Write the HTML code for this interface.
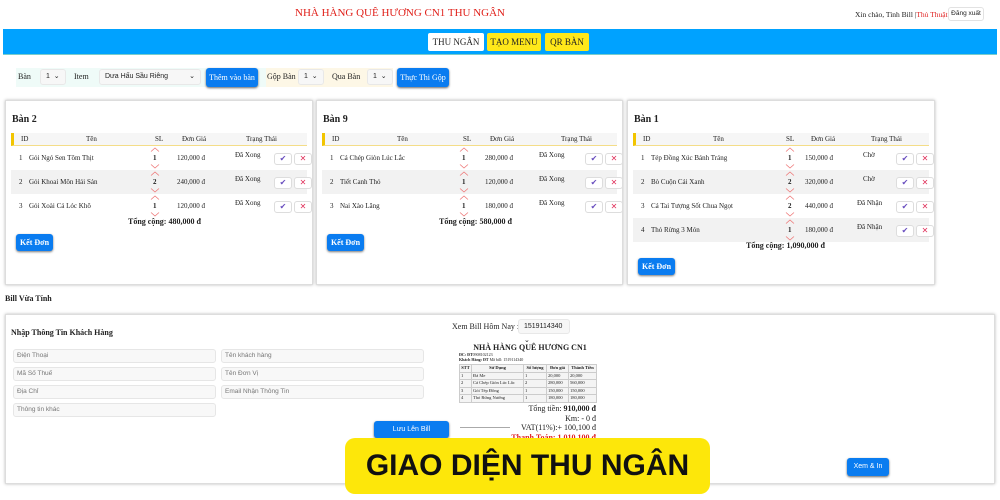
<!DOCTYPE html>
<html><head><meta charset="utf-8"><style>
*{box-sizing:border-box;margin:0;padding:0}
body{width:1000px;height:500px;overflow:hidden;background:#fff;font-family:"Liberation Serif",serif;font-size:8px;color:#222;position:relative}
.a{position:absolute}
.title{left:295px;top:7px;color:#e0201a;font-size:11px;white-space:nowrap}
.bar{left:3px;top:29px;width:994px;height:26px;background:#00a2ff;border-bottom:1px solid #7cc}
.nb{top:33px;height:18px;font-size:9px;line-height:18px;text-align:center;border-radius:2px}
.sel{background:#f7f7f7;border:1px solid #e8e8e8;border-radius:3px;height:16px;font-family:"Liberation Sans",sans-serif;font-size:7px;line-height:14px;padding-left:5px}
.bb{background:#0a7cf0;color:#fff;border-radius:3px;height:19px;font-size:8px;line-height:19px;text-align:center;box-shadow:0 1px 2px #666}
.card{top:100px;height:185px;border:1px solid #ddd;box-shadow:0 0 3px #bbb;background:#fff}
.card h4{position:absolute;left:6px;top:13px;font-size:10px}
.hd{position:absolute;left:5px;right:5px;top:32px;height:13px;background:#f6f6f6;border-left:3px solid #f2c500;border-bottom:1px solid #f4dd88}
.row{position:absolute;left:5px;right:5px;height:24px}
.g{background:#f2f2f2}
.row span,.hd span{position:absolute;top:8px;font-size:7px;white-space:nowrap}
.hd span{top:2px}
.ck,.xx{position:absolute;top:7px;width:18px;height:12px;border:1px solid #ddd;border-radius:3px;background:#fff;font-size:8px;line-height:10px;text-align:center;font-family:"DejaVu Sans",sans-serif}
.ck{color:#6a4fbf}.xx{color:#e0305a}
.row svg{position:absolute;width:10px;height:5px}
.tot{position:absolute;font-weight:bold;font-size:8px}
.ke{position:absolute;left:10px;width:37px;height:17px;background:#0a7cf0;color:#fff;font-weight:bold;border-radius:3px;font-size:8px;line-height:17px;text-align:center;box-shadow:0 1px 2px #777}
.inp{position:absolute;height:14px;border:1px solid #e6e6e6;background:#f8f8f8;border-radius:3px;font-family:"Liberation Sans",sans-serif;font-size:6.5px;color:#777;line-height:12px;padding-left:3px}
.bt{table-layout:fixed}
.bt td,.bt th{border:1px solid #ccc;font-size:4.5px;padding:0 1px;height:7.5px;line-height:6px;white-space:nowrap;overflow:hidden}
</style></head><body>
<div class="a title">NHÀ HÀNG QUÊ HƯƠNG CN1 THU NGÂN</div>
<div class="a" style="left:855px;top:10px;font-size:7.5px">Xin chào, Tinh Bill |<span style="color:#e02020">Thủ Thuật</span></div>
<div class="a" style="left:948px;top:7px;width:36px;height:14px;border:1px solid #e2e2e2;border-radius:3px;font-family:'Liberation Sans',sans-serif;font-size:6.5px;line-height:12px;text-align:center">Đăng xuất</div>
<div class="a bar"></div>
<div class="a nb" style="left:428px;width:56px;background:#fff">THU NGÂN</div>
<div class="a nb" style="left:487px;width:54px;background:#ffe81a">TẠO MENU</div>
<div class="a nb" style="left:545px;width:44px;background:#ffe81a">QR BÀN</div>

<div class="a" style="left:16px;top:68px;width:250px;height:19px;background:#effbf8"></div>
<div class="a" style="left:18px;top:72px;font-size:8px">Bàn</div>
<div class="a sel" style="left:40px;top:69px;width:26px">1 &nbsp;⌄</div>
<div class="a" style="left:74px;top:72px;font-size:8px">Item</div>
<div class="a sel" style="left:99px;top:69px;width:102px">Dưa Hấu Sầu Riêng<span style="position:absolute;right:5px">⌄</span></div>
<div class="a bb" style="left:206px;top:68px;width:52px">Thêm vào bàn</div>
<div class="a" style="left:266px;top:68px;width:127px;height:19px;background:#fdf7e6"></div>
<div class="a" style="left:267px;top:72px;font-size:8px">Gộp Bàn</div>
<div class="a sel" style="left:298px;top:69px;width:26px">1 &nbsp;⌄</div>
<div class="a" style="left:332px;top:72px;font-size:8px">Qua Bàn</div>
<div class="a sel" style="left:367px;top:69px;width:26px">1 &nbsp;⌄</div>
<div class="a bb" style="left:397px;top:68px;width:52px">Thực Thi Gộp</div>

<!-- card 1 -->
<div class="a card" style="left:5px;width:308px">
<h4>Bàn 2</h4>
<div class="hd"><span style="left:7px">ID</span><span style="left:72px">Tên</span><span style="left:141px">SL</span><span style="left:168px">Đơn Giá</span><span style="left:232px">Trạng Thái</span></div>
<div class="row" style="top:45px"><span style="left:8px">1</span><span style="left:18px">Gỏi Ngó Sen Tôm Thịt</span><svg style="left:139px;top:1px" viewBox="0 0 10 5"><polyline points="1,4.5 5,1 9,4.5" fill="none" stroke="#e77" stroke-width="0.8"/></svg><span style="left:142px;font-weight:bold">1</span><svg style="left:139px;top:18px" viewBox="0 0 10 5"><polyline points="1,0.5 5,4 9,0.5" fill="none" stroke="#e77" stroke-width="0.8"/></svg><span style="left:166px">120,000 đ</span><span style="left:224px;top:5px">Đã Xong</span><div class="ck" style="left:263px">✔</div><div class="xx" style="left:283px">✕</div></div>
<div class="row g" style="top:69px"><span style="left:8px">2</span><span style="left:18px">Gỏi Khoai Môn Hải Sản</span><svg style="left:139px;top:1px" viewBox="0 0 10 5"><polyline points="1,4.5 5,1 9,4.5" fill="none" stroke="#e77" stroke-width="0.8"/></svg><span style="left:142px;font-weight:bold">2</span><svg style="left:139px;top:18px" viewBox="0 0 10 5"><polyline points="1,0.5 5,4 9,0.5" fill="none" stroke="#e77" stroke-width="0.8"/></svg><span style="left:166px">240,000 đ</span><span style="left:224px;top:5px">Đã Xong</span><div class="ck" style="left:263px">✔</div><div class="xx" style="left:283px">✕</div></div>
<div class="row" style="top:93px"><span style="left:8px">3</span><span style="left:18px">Gỏi Xoài Cá Lóc Khô</span><svg style="left:139px;top:1px" viewBox="0 0 10 5"><polyline points="1,4.5 5,1 9,4.5" fill="none" stroke="#e77" stroke-width="0.8"/></svg><span style="left:142px;font-weight:bold">1</span><svg style="left:139px;top:18px" viewBox="0 0 10 5"><polyline points="1,0.5 5,4 9,0.5" fill="none" stroke="#e77" stroke-width="0.8"/></svg><span style="left:166px">120,000 đ</span><span style="left:224px;top:5px">Đã Xong</span><div class="ck" style="left:263px">✔</div><div class="xx" style="left:283px">✕</div></div>
<div class="tot" style="left:122px;top:116px">Tổng cộng: 480,000 đ</div>
<div class="ke" style="top:133px">Kết Đơn</div>
</div>

<!-- card 2 -->
<div class="a card" style="left:316px;width:307px">
<h4>Bàn 9</h4>
<div class="hd"><span style="left:7px">ID</span><span style="left:72px">Tên</span><span style="left:138px">SL</span><span style="left:165px">Đơn Giá</span><span style="left:236px">Trạng Thái</span></div>
<div class="row" style="top:45px"><span style="left:8px">1</span><span style="left:18px">Cá Chép Giòn Lúc Lắc</span><svg style="left:137px;top:1px" viewBox="0 0 10 5"><polyline points="1,4.5 5,1 9,4.5" fill="none" stroke="#e77" stroke-width="0.8"/></svg><span style="left:140px;font-weight:bold">1</span><svg style="left:137px;top:18px" viewBox="0 0 10 5"><polyline points="1,0.5 5,4 9,0.5" fill="none" stroke="#e77" stroke-width="0.8"/></svg><span style="left:163px">280,000 đ</span><span style="left:217px;top:5px">Đã Xong</span><div class="ck" style="left:263px">✔</div><div class="xx" style="left:283px">✕</div></div>
<div class="row g" style="top:69px"><span style="left:8px">2</span><span style="left:18px">Tiết Canh Thỏ</span><svg style="left:137px;top:1px" viewBox="0 0 10 5"><polyline points="1,4.5 5,1 9,4.5" fill="none" stroke="#e77" stroke-width="0.8"/></svg><span style="left:140px;font-weight:bold">1</span><svg style="left:137px;top:18px" viewBox="0 0 10 5"><polyline points="1,0.5 5,4 9,0.5" fill="none" stroke="#e77" stroke-width="0.8"/></svg><span style="left:163px">120,000 đ</span><span style="left:217px;top:5px">Đã Xong</span><div class="ck" style="left:263px">✔</div><div class="xx" style="left:283px">✕</div></div>
<div class="row" style="top:93px"><span style="left:8px">3</span><span style="left:18px">Nai Xào Lăng</span><svg style="left:137px;top:1px" viewBox="0 0 10 5"><polyline points="1,4.5 5,1 9,4.5" fill="none" stroke="#e77" stroke-width="0.8"/></svg><span style="left:140px;font-weight:bold">1</span><svg style="left:137px;top:18px" viewBox="0 0 10 5"><polyline points="1,0.5 5,4 9,0.5" fill="none" stroke="#e77" stroke-width="0.8"/></svg><span style="left:163px">180,000 đ</span><span style="left:217px;top:5px">Đã Xong</span><div class="ck" style="left:263px">✔</div><div class="xx" style="left:283px">✕</div></div>
<div class="tot" style="left:122px;top:116px">Tổng cộng: 580,000 đ</div>
<div class="ke" style="top:133px">Kết Đơn</div>
</div>

<!-- card 3 -->
<div class="a card" style="left:627px;width:308px">
<h4>Bàn 1</h4>
<div class="hd"><span style="left:7px">ID</span><span style="left:77px">Tên</span><span style="left:150px">SL</span><span style="left:175px">Đơn Giá</span><span style="left:235px">Trạng Thái</span></div>
<div class="row" style="top:45px"><span style="left:8px">1</span><span style="left:18px">Tép Đồng Xúc Bánh Tráng</span><svg style="left:152px;top:1px" viewBox="0 0 10 5"><polyline points="1,4.5 5,1 9,4.5" fill="none" stroke="#e77" stroke-width="0.8"/></svg><span style="left:155px;font-weight:bold">1</span><svg style="left:152px;top:18px" viewBox="0 0 10 5"><polyline points="1,0.5 5,4 9,0.5" fill="none" stroke="#e77" stroke-width="0.8"/></svg><span style="left:172px">150,000 đ</span><span style="left:230px;top:5px">Chờ</span><div class="ck" style="left:263px">✔</div><div class="xx" style="left:283px">✕</div></div>
<div class="row g" style="top:69px"><span style="left:8px">2</span><span style="left:18px">Bò Cuộn Cải Xanh</span><svg style="left:152px;top:1px" viewBox="0 0 10 5"><polyline points="1,4.5 5,1 9,4.5" fill="none" stroke="#e77" stroke-width="0.8"/></svg><span style="left:155px;font-weight:bold">2</span><svg style="left:152px;top:18px" viewBox="0 0 10 5"><polyline points="1,0.5 5,4 9,0.5" fill="none" stroke="#e77" stroke-width="0.8"/></svg><span style="left:172px">320,000 đ</span><span style="left:230px;top:5px">Chờ</span><div class="ck" style="left:263px">✔</div><div class="xx" style="left:283px">✕</div></div>
<div class="row" style="top:93px"><span style="left:8px">3</span><span style="left:18px">Cá Tai Tượng Sốt Chua Ngọt</span><svg style="left:152px;top:1px" viewBox="0 0 10 5"><polyline points="1,4.5 5,1 9,4.5" fill="none" stroke="#e77" stroke-width="0.8"/></svg><span style="left:155px;font-weight:bold">2</span><svg style="left:152px;top:18px" viewBox="0 0 10 5"><polyline points="1,0.5 5,4 9,0.5" fill="none" stroke="#e77" stroke-width="0.8"/></svg><span style="left:172px">440,000 đ</span><span style="left:224px;top:5px">Đã Nhận</span><div class="ck" style="left:263px">✔</div><div class="xx" style="left:283px">✕</div></div>
<div class="row g" style="top:117px"><span style="left:8px">4</span><span style="left:18px">Thỏ Rừng 3 Món</span><svg style="left:152px;top:1px" viewBox="0 0 10 5"><polyline points="1,4.5 5,1 9,4.5" fill="none" stroke="#e77" stroke-width="0.8"/></svg><span style="left:155px;font-weight:bold">1</span><svg style="left:152px;top:18px" viewBox="0 0 10 5"><polyline points="1,0.5 5,4 9,0.5" fill="none" stroke="#e77" stroke-width="0.8"/></svg><span style="left:172px">180,000 đ</span><span style="left:224px;top:5px">Đã Nhận</span><div class="ck" style="left:263px">✔</div><div class="xx" style="left:283px">✕</div></div>
<div class="tot" style="left:118px;top:140px">Tổng cộng: 1,090,000 đ</div>
<div class="ke" style="top:157px">Kết Đơn</div>
</div>

<div class="a" style="left:5px;top:294px;font-size:8px;font-weight:bold">Bill Vừa Tính</div>
<div class="a" style="left:5px;top:314px;width:990px;height:170px;border:1px solid #ddd;box-shadow:0 0 3px #bbb"></div>
<div class="a" style="left:11px;top:328px;font-size:8px;font-weight:bold">Nhập Thông Tin Khách Hàng</div>
<div class="inp" style="left:13px;top:349px;width:203px">Điện Thoại</div>
<div class="inp" style="left:221px;top:349px;width:203px">Tên khách hàng</div>
<div class="inp" style="left:13px;top:367px;width:203px">Mã Số Thuế</div>
<div class="inp" style="left:221px;top:367px;width:203px">Tên Đơn Vị</div>
<div class="inp" style="left:13px;top:385px;width:203px">Địa Chỉ</div>
<div class="inp" style="left:221px;top:385px;width:203px">Email Nhận Thông Tin</div>
<div class="inp" style="left:13px;top:403px;width:203px">Thông tin khác</div>
<div class="a bb" style="left:374px;top:421px;width:75px;height:17px;line-height:17px;font-family:'Liberation Sans',sans-serif;font-size:7px">Lưu Lên Bill</div>

<div class="a" style="left:452px;top:322px;font-size:8px">Xem Bill Hôm Nay :</div>
<div class="a sel" style="left:518px;top:319px;width:52px;height:15px;font-size:7px">1519114340 ⌄</div>
<div class="a" style="left:460px;top:343px;width:140px;text-align:center;font-weight:bold;font-size:8px">NHÀ HÀNG QUÊ HƯƠNG CN1</div>
<div class="a" style="left:459px;top:352px;font-size:4px;line-height:5px"><b>ĐC: ĐT</b>0908102123<br><b>Khách Hàng: ĐT</b> Mã bill: 1519114340</div>
<table class="a bt" style="left:459px;top:364px;width:137px;border-collapse:collapse;background:#f4f4f4">
<colgroup><col style="width:12px"><col style="width:52px"><col style="width:23px"><col style="width:22px"><col style="width:28px"></colgroup>
<tr><th>STT</th><th>Sử Dụng</th><th>Số lượng</th><th>Đơn giá</th><th>Thành Tiền</th></tr>
<tr><td>1</td><td>Đá Me</td><td>1</td><td>20,000</td><td>20,000</td></tr>
<tr><td>2</td><td>Cá Chép Giòn Lúc Lắc</td><td>2</td><td>280,000</td><td>560,000</td></tr>
<tr><td>3</td><td>Gỏi Tép Đồng</td><td>1</td><td>150,000</td><td>150,000</td></tr>
<tr><td>4</td><td>Thỏ Rừng Nướng</td><td>1</td><td>180,000</td><td>180,000</td></tr>
</table>
<div class="a" style="left:470px;top:404px;width:126px;text-align:right;font-size:8px;line-height:9.5px">Tổng tiền: <b>910,000 đ</b><br>Km: - 0 đ<br>VAT(11%):+ 100,100 đ<br><b style="color:#e02020">Thanh Toán: 1,010,100 đ</b></div>
<div class="a" style="left:460px;top:427px;width:50px;border-top:1px solid #aaa"></div>
<div class="a bb" style="left:847px;top:458px;width:42px;height:18px;line-height:18px;font-family:'Liberation Sans',sans-serif;font-size:7px">Xem &amp; In</div>

<div class="a" style="left:345px;top:438px;width:365px;height:56px;background:#fde70a;border-radius:10px;text-align:center;font-family:'Liberation Sans',sans-serif;font-weight:bold;font-size:30px;line-height:56px;color:#111">GIAO DIỆN THU NGÂN</div>
</body></html>
